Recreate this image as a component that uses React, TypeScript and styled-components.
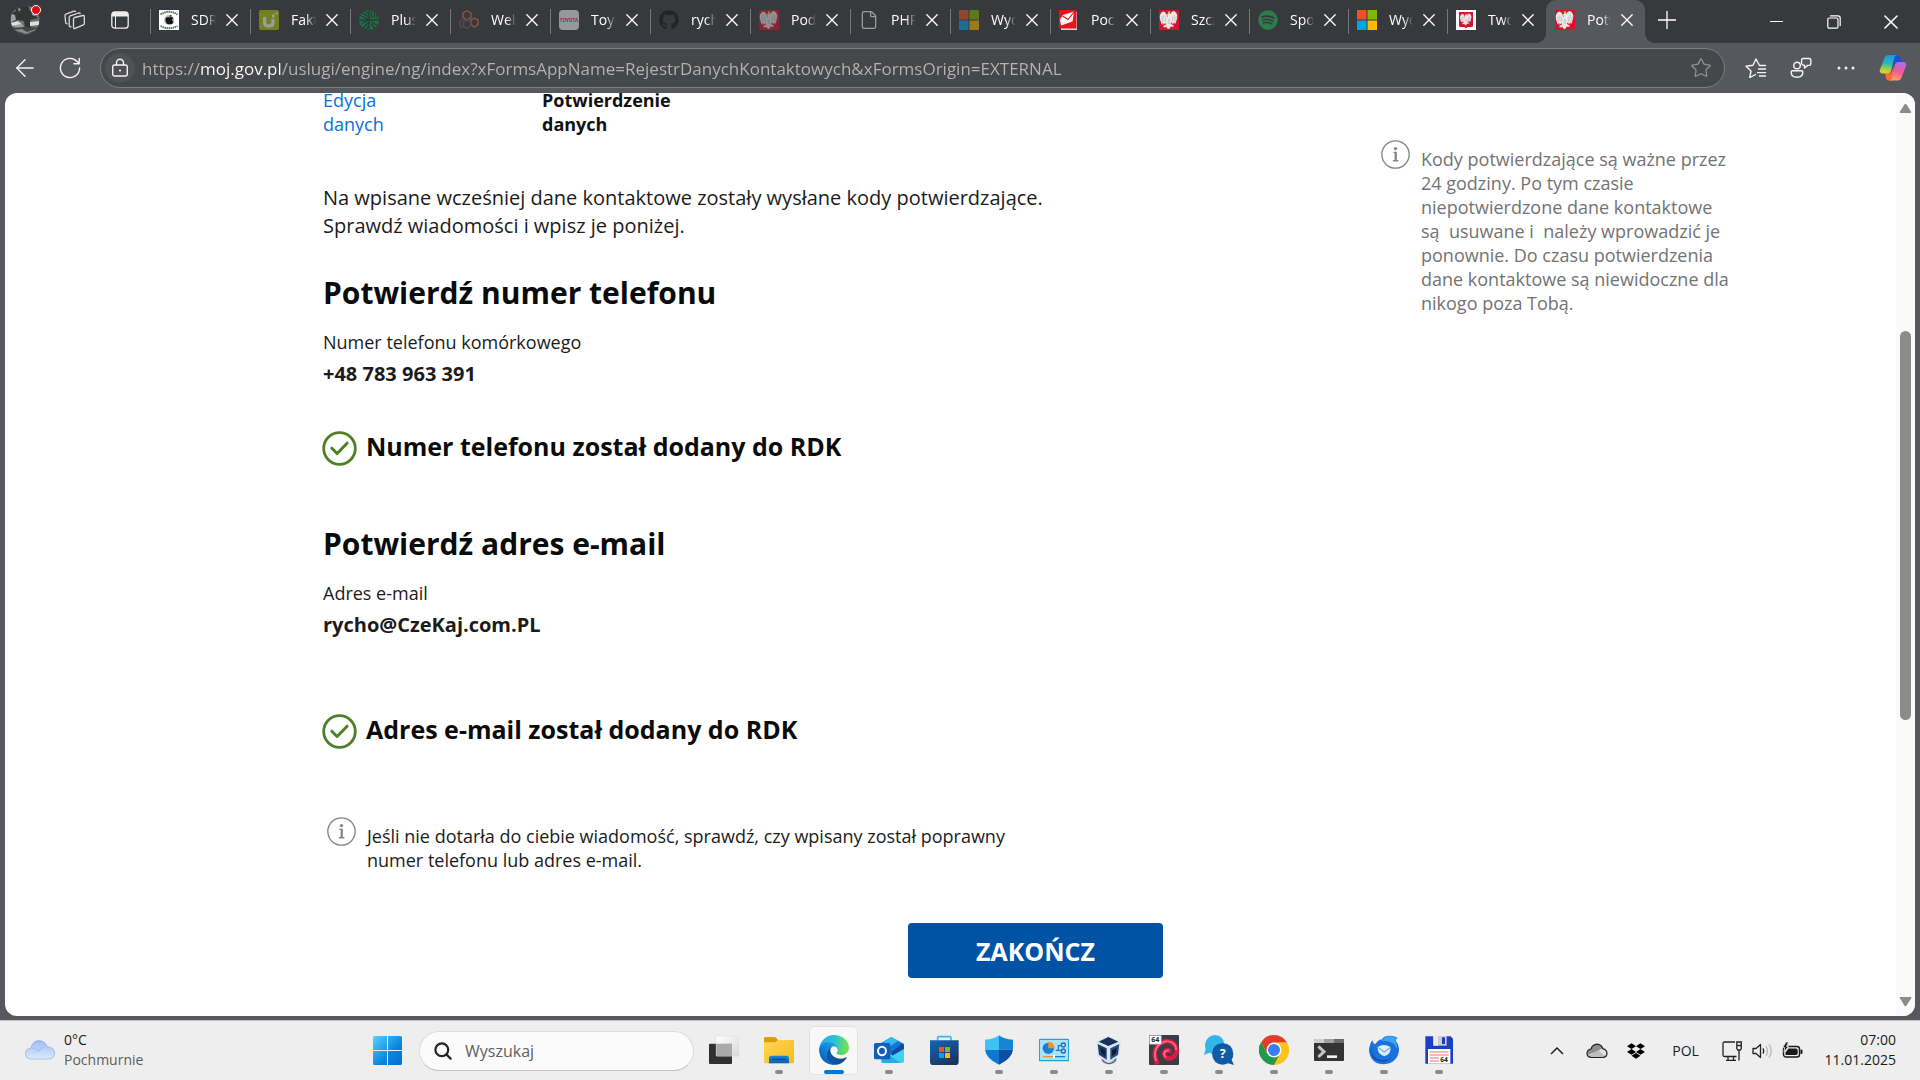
import React from "react";
import styled, { createGlobalStyle, css } from "styled-components";
import { FaApple, FaDropbox, FaGithub, FaSpotify } from "react-icons/fa";
import { ArrowLeft, File, Star } from "lucide-react";

const uiFont = `"Open Sans", "Noto Sans", sans-serif`;

const GlobalStyle = createGlobalStyle`
  * { box-sizing: border-box; }
  html, body { margin: 0; }
  body { font-family: ${uiFont}; background: #57585d; }
  h2, p { margin: 0; }
  button, input { font-family: inherit; }
`;

const Desktop = styled.div`
  display: flex;
  flex-direction: column;
  height: 100vh;
  overflow: hidden;
`;

const plainButton = css`
  display: flex;
  align-items: center;
  justify-content: center;
  flex: none;
  padding: 0;
  border: 0;
  background: none;
  color: inherit;
`;

/* ---------- tab strip ---------- */

const TabBar = styled.header`
  display: flex;
  flex: none;
  height: 43px;
  padding-right: 1px;
  background: #38393c;
  color: #fff;
`;

const BarButton = styled.button<{ $width: number }>`
  ${plainButton}
  width: ${(p) => p.$width}px;
  height: 40px;
`;

const WindowButton = styled(BarButton)`
  height: 43px;
`;

const Tabs = styled.nav`
  display: flex;
  margin-left: 10px;
`;

const Tab = styled.div<{ $active?: boolean; $slim?: boolean }>`
  position: relative;
  display: flex;
  align-items: center;
  flex: 0 1 ${(p) => (p.$slim ? 99 : 100)}px;
  min-width: 0;
  padding: 0 9px 3px 8px;
  border-left: 1px solid transparent;
  ${(p) =>
    p.$active
      ? css`
          background: #57585d;
          border-radius: 10px 10px 0 0;
          &::before,
          &::after {
            content: "";
            position: absolute;
            bottom: 0;
            width: 10px;
            height: 10px;
          }
          &::before {
            left: -11px;
            background: radial-gradient(circle at 0 0, transparent 10px, #57585d 10px);
          }
          &::after {
            right: -10px;
            background: radial-gradient(circle at 100% 0, transparent 10px, #57585d 10px);
          }
        `
      : css`
          background: linear-gradient(#77787b, #77787b) left 9px / 1px 25px no-repeat border-box;
        `}
`;

const Favicon = styled.span<{ $asleep?: boolean }>`
  display: flex;
  flex: none;
  width: 20px;
  height: 20px;
  opacity: ${(p) => (p.$asleep ? 0.5 : 1)};
`;

const TabTitle = styled.span`
  flex: 1;
  margin: 0 7px 0 12px;
  overflow: hidden;
  white-space: nowrap;
  font-size: 14px;
  line-height: 20px;
  mask-image: linear-gradient(to right, #000 60%, transparent);
`;

const CloseTab = styled.button`
  ${plainButton}
  width: 18px;
  height: 20px;
`;

const DragArea = styled.div`
  flex: 1;
  min-width: 20px;
`;

/* ---------- address bar ---------- */

const Toolbar = styled.div`
  display: flex;
  align-items: center;
  flex: none;
  height: 50px;
  padding: 0 2px;
  background: #57585d;
  color: #f4f4f4;
`;

const ToolButton = styled.button`
  ${plainButton}
  width: 45px;
  height: 40px;
`;

const CopilotButton = styled(ToolButton)`
  width: 50px;
`;

const AddressBox = styled.form`
  display: flex;
  align-items: center;
  flex: 1;
  height: 40px;
  margin: 0 8px;
  padding: 0 4px;
  border: 1px solid #7d7e82;
  border-radius: 20px;
  background: #464749;
`;

const SiteInfo = styled.button`
  ${plainButton}
  width: 30px;
  height: 30px;
  border-radius: 15px;
  background: #505155;
`;

const AddressInput = styled.input`
  flex: 1;
  min-width: 0;
  height: 30px;
  margin-left: 7px;
  padding: 0;
  border: 0;
  outline: 0;
  font-size: 17px;
  color: transparent;
  background: linear-gradient(to right, #b4b4b5 58px, #fff 58px, #fff 140px, #b4b4b5 140px);
  background-clip: text;
`;

const StarButton = styled(ToolButton)`
  width: 38px;
  height: 38px;
  color: #909195;
`;

/* ---------- page ---------- */

const Frame = styled.div`
  display: flex;
  flex: 1;
  min-height: 0;
  padding: 0 5px 4px;
  background: #57585d;
`;

const Viewport = styled.div`
  display: flex;
  flex: 1;
  min-width: 0;
  overflow: hidden;
  border-radius: 12px;
  background: #fff;
`;

const Page = styled.div`
  display: grid;
  grid-template-columns: minmax(0, 1fr) 351px;
  align-items: start;
  flex: 1;
  min-width: 0;
  padding: 0 164px 0 318px;
`;

const Main = styled.main`
  display: flex;
  flex-direction: column;
  max-width: 840px;
  margin-top: -5px;
  color: #1b1b1b;
`;

const Steps = styled.nav`
  display: flex;
  font-size: 18px;
  line-height: 24px;
`;

const StepLink = styled.a`
  width: 219px;
  color: #0c6fde;
  text-decoration: none;
`;

const CurrentStep = styled.strong`
  font-weight: 700;
  color: #111;
`;

const Lead = styled.p`
  margin-top: 48px;
  font-size: 20px;
  line-height: 28px;
`;

const Title = styled.h2<{ $gap: number }>`
  margin-top: ${(p) => p.$gap}px;
  font-size: 30px;
  line-height: 40px;
  font-weight: 700;
  color: #0b0b0b;
`;

const FieldLabel = styled.p`
  margin-top: 17px;
  font-size: 18px;
  line-height: 24px;
`;

const FieldValue = styled.p`
  margin-top: 6px;
  font-size: 20px;
  line-height: 28px;
  font-weight: 700;
`;

const Status = styled.div<{ $gap: number }>`
  display: flex;
  align-items: flex-start;
  gap: 9px;
  margin: ${(p) => p.$gap}px 0 0 -1px;
  font-size: 25px;
  line-height: 30px;
  font-weight: 700;
  color: #0b0b0b;
`;

const Note = styled.div`
  display: flex;
  align-items: flex-start;
  gap: 11px;
`;

const NoteText = styled.p`
  flex: 1;
  padding-top: 7px;
  font-size: 18px;
  line-height: 24px;
`;

const MainNote = styled(Note)`
  margin: 68px 150px 0 4px;
`;

const Aside = styled.aside`
  padding-top: 47px;
  color: #737373;
`;

const FinishButton = styled.button`
  align-self: flex-end;
  width: 255px;
  height: 55px;
  margin-top: 51px;
  padding: 0;
  border: 0;
  border-radius: 4px;
  background: #0052a5;
  color: #fff;
  font-size: 25px;
  font-weight: 700;
`;

const ScrollTrack = styled.div`
  display: flex;
  flex-direction: column;
  align-items: center;
  flex: none;
  width: 19px;
  padding: 10px 0 9px;
  background: #fafafa;
`;

const ScrollSpace = styled.div<{ $share: number }>`
  flex: ${(p) => p.$share};
`;

const ScrollThumb = styled.div`
  flex: 388;
  width: 11px;
  border-radius: 6px;
  background: #8b8b8b;
`;

/* ---------- taskbar ---------- */

const Taskbar = styled.footer`
  display: flex;
  align-items: center;
  flex: none;
  height: 60px;
  padding-right: 24px;
  border-top: 1px solid #c4c4c4;
  background: #eee;
  color: #1b1b1b;
`;

const Weather = styled.button`
  ${plainButton}
  justify-content: flex-start;
  gap: 9px;
  width: 360px;
  padding: 0 0 2px 25px;
  text-align: left;
  font-size: 14px;
  line-height: 20px;
`;

const WeatherText = styled.span`
  color: #5d5d5d;
`;

const WeatherDegrees = styled.span`
  display: block;
  color: #1b1b1b;
`;

const StartButton = styled.button`
  ${plainButton}
  width: 55px;
  height: 48px;
`;

const SearchBox = styled.label`
  display: flex;
  align-items: center;
  gap: 13px;
  flex: none;
  width: 275px;
  height: 40px;
  margin: 0 2px 0 4px;
  padding: 0 14px;
  border: 1px solid #dcdcdc;
  border-bottom-color: #c4c4c4;
  border-radius: 20px;
  background: #fbfbfb;
`;

const SearchInput = styled.input`
  flex: 1;
  min-width: 0;
  padding: 0;
  border: 0;
  outline: 0;
  background: none;
  font-size: 16px;
  &::placeholder {
    color: #5f5f5f;
    opacity: 1;
  }
`;

const AppButton = styled.button<{ $state?: "open" | "active" }>`
  ${plainButton}
  flex-direction: column;
  justify-content: flex-start;
  gap: 5px;
  width: 49px;
  height: 49px;
  margin: 0 3px;
  padding-top: 8px;
  border: 1px solid ${(p) => (p.$state === "active" ? "#e2e2e2" : "transparent")};
  border-radius: 5px;
  background: ${(p) => (p.$state === "active" ? "#f8f8f8" : "none")};
  &::after {
    content: "";
    width: ${(p) => (p.$state === "active" ? 20 : 8)}px;
    height: 4px;
    border-radius: 2px;
    background: ${(p) => (p.$state === "active" ? "#0078d4" : p.$state ? "#8a8a8a" : "transparent")};
  }
`;

const Tray = styled.div`
  display: flex;
  align-items: center;
  margin-left: auto;
`;

const TrayButton = styled.button<{ $width: number }>`
  ${plainButton}
  width: ${(p) => p.$width}px;
  height: 48px;
  font-size: 14px;
`;

const Clock = styled.button`
  ${plainButton}
  margin-left: 16px;
  padding-bottom: 2px;
  text-align: right;
  font-size: 14px;
  line-height: 20px;
`;

/* ---------- drawings ---------- */

const CrossIcon = ({ size = 12 }: { size?: number }) => (
  <svg width={size} height={size} viewBox="0 0 12 12" stroke="#fff" strokeWidth="1.3" strokeLinecap="round">
    <path d="M.8.8l10.400 10.400M11.200.8L.8 11.200" />
  </svg>
);

const Eagle = () => (
  <g>
    <path
      fill="#e9e9ea"
      d="M8.300 7.500L7.600 4.600 6.300 2.600 4.600 1.600 2.800 2.300 1.400 4 .7 6.200 1 9.500l.9 2.600.5 2.400 1-1.700.6 2.400 1-2.300.6 1.700 1.100-1.500.3 1.300-2.300 1.300-.8 1.500 1.300-.4.6.9 1.600-1 .5 1.500L10 19l1.100-1.300.5-1.500 1.600 1 .6-.9 1.300.4-.8-1.500-2.300-1.300.3-1.300 1.100 1.500.6-1.700 1 2.300.6-2.400 1 1.700.5-2.400.9-2.600.3-3.300-.7-2.200-1.400-1.700-1.800-.7-1.700 1-1.300 2-.7 2.900z"
    />
    <path fill="#e9e9ea" d="M8 8.500l.6-2.700L7.800 5l1.300-1.700h1.800q1.400.7 1.200 2.300L12 8.500z" />
    <path fill="#f1c232" d="M8.800 1.200l.7.600.5-.8.500.8.800-.6-.2 2.200H9zM7.300 15.600l1 .9-1.300.3zM12.700 15.600l-1 .9 1.300.3z" />
    <path
      stroke="#b9a9ae"
      strokeWidth=".5"
      fill="none"
      d="M2.800 6l.5 5.500M4.600 5l.4 6.500M6.300 6.500l.4 5.500M17.200 6l-.5 5.500M15.400 5l-.4 6.500M13.700 6.500l-.4 5.500M9.300 9v5M10.700 9v5"
    />
  </g>
);

const EagleIcon = () => (
  <svg width="20" height="20" viewBox="0 0 20 20">
    <path fill="#d4142f" d="M0 0h20v20H0z" />
    <Eagle />
  </svg>
);

const EagleShieldIcon = () => (
  <svg width="20" height="20" viewBox="0 0 20 20">
    <path fill="#fff" d="M0 0h20v20H0z" />
    <path fill="#d4142f" d="M3 2h14v13.500q0 1.500-1.500 1.500h-4L10 18.500 8.500 17h-4Q3 17 3 15.500z" />
    <g transform="translate(3.500 2.800) scale(.65)">
      <Eagle />
    </g>
  </svg>
);

const WindowsTiles = () => (
  <svg width="20" height="20" viewBox="0 0 20 20">
    <path fill="#f25022" d="M0 0h9.500v9.500H0z" />
    <path fill="#7fba00" d="M10.500 0H20v9.500h-9.500z" />
    <path fill="#00a4ef" d="M0 10.500h9.500V20H0z" />
    <path fill="#ffb900" d="M10.500 10.500H20V20h-9.500z" />
  </svg>
);

const AppleStampIcon = () => (
  <svg width="20" height="20" viewBox="0 0 20 20">
    <path fill="#fff" d="M0 0h20v20H0z" />
    <path fill="none" stroke="#58705a" strokeWidth="1.900" strokeDasharray="1.500 .6" d="M1.500 4.500q8.500-5.500 17 0M1.500 16q8.500 4.500 17 0" />
    <circle cx="10" cy="10" r="5" fill="#8b8f8c" opacity=".6" />
    <g transform="translate(5 4)" color="#151515">
      <FaApple size={11} />
    </g>
  </svg>
);

const FakturaIcon = () => (
  <svg width="20" height="20" viewBox="0 0 20 20">
    <rect width="20" height="20" rx="2" fill="#a9c800" />
    <path fill="none" stroke="#fff" strokeWidth="3.200" d="M5.600 7v5.500q0 3.600 4.200 3.600t4.200-3.600V9" />
    <path fill="#fff" d="M13 4.600h2.800v2.800H13zM16.500 2.500h2v2h-2z" />
  </svg>
);

const PlusIcon = () => (
  <svg width="20" height="20" viewBox="0 0 20 20">
    <circle cx="10" cy="10" r="10" fill="#00a65a" />
    <path
      fill="none"
      stroke="#25362d"
      strokeWidth="1.300"
      d="M10 0v20M0 10h20M1.500 5.500L10 9.500M3.500 3L10 7M6 1l4 3M10 12l-6 6M10 9.500L3 13.500M10 15l-3 5M12.500 0v8M15.500 1.500V8M18 4v4M12.500 12l6 3.500M12 14l4 4"
    />
  </svg>
);

const HoneycombIcon = () => (
  <svg width="20" height="20" viewBox="0 0 20 20" fill="none" strokeWidth="1.500">
    <path stroke="#d2703f" d="M4 3l4-2.300L12 3v4.500L8 10 4 7.500zM12 10l3.500-2L19 10v4.500L15.500 17 12 14.500z" />
    <path stroke="#6a5d6c" d="M4.500 11.500l3.500-2 3.500 2V16L8 18.500 4.500 16zM4 9.500l-3 2V16l3 2" />
  </svg>
);

const ToyotaIcon = () => (
  <svg width="20" height="20" viewBox="0 0 20 20">
    <rect width="20" height="20" rx="4" fill="#f4f4f4" />
    <text x="10" y="11.600" textAnchor="middle" fontSize="4.500" fontWeight="700" fill="#d81e2c">
      TOYOTA
    </text>
  </svg>
);

const EnvelopeIcon = () => (
  <svg width="20" height="20" viewBox="0 0 20 20">
    <path fill="#d9d9d9" d="M2 2h16v18H2z" />
    <path fill="#e8131b" d="M0 0h17.500v18.500H0z" />
    <path fill="#fff" d="M1 9.500L4 5l11-3.500-1.500 10L2 15.500z" />
    <path stroke="#e8131b" strokeWidth="1.200" fill="none" d="M3.500 6l5.500 3.500L15 2" />
  </svg>
);

const AvatarIcon = () => (
  <svg width="50" height="40" viewBox="0 0 50 40">
    <defs>
      <clipPath id="avatar">
        <circle cx="25" cy="20" r="14.500" />
      </clipPath>
    </defs>
    <g clipPath="url(#avatar)">
      <path fill="#6c6e6e" d="M10 5h30v30H10z" />
      <path fill="#333535" d="M14 5h14l2 6 5-2-1 6 4 3-8 2 1 8-6 1-1-8-6-1-5 2 2-6-3-3 4-2z" />
      <path fill="#9da0a0" d="M11 14l4 1 1 5-5 2zM31 6l6 3-2 7-3-1zM14 25l7-3 3 5-8 3zM18 8l3 1-2 3z" />
      <path fill="#dedede" d="M11 23l7-2 3 3-9 2zM30 22l9-1v4l-9 1z" />
      <path fill="#444646" d="M10 28l14-1 16 1v8H10z" />
      <path fill="#8a8c8c" d="M14 30l8-1 5 3 9-3v1l-10 4z" />
    </g>
    <circle cx="36" cy="10" r="4.500" fill="#e30613" stroke="#fff" />
  </svg>
);

const WorkspacesIcon = () => (
  <svg width="22" height="20" viewBox="0 0 22 20" fill="none" stroke="#dcdcdc" strokeWidth="1.300" strokeLinejoin="round">
    <path d="M9.500 8.800q0-1 1-1.300l8.500-2q1.300-.3 1.300 1v7q0 1-.9 1.400l-8.300 3.500q-1.600.7-1.600-1z" />
    <path d="M7.500 16.500l-1.300.300q-1-.2-1-1.300V7.200q0-1 1-1.300L14.500 3q1.500-.4 1.800 1.200M3.600 14l-1-.3q-.9-.3-1-1.300L1 5.500q0-1 .9-1.300L10 1.100q1.300-.3 1.700.9" />
  </svg>
);

const TabActionsIcon = () => (
  <svg width="18" height="18" viewBox="0 0 18 18" fill="none" stroke="#eee" strokeWidth="1.300">
    <rect x=".8" y=".8" width="16.400" height="16.400" rx="3" />
    <path fill="#eee" stroke="none" d="M1 3q0-2 2-2h12q2 0 2 2v2.500H1z" />
    <path strokeWidth="1" d="M4.500 5v12" />
  </svg>
);

const LockIcon = () => (
  <svg width="18" height="20" viewBox="0 0 18 20" fill="none" stroke="#f4f4f4" strokeWidth="1.400">
    <rect x="1.700" y="7" width="14.600" height="11" rx="2" />
    <path d="M5.500 7V4.800a3.500 3.500 0 0 1 7 0V7" />
    <circle cx="9" cy="12.500" r="1.100" fill="#f4f4f4" stroke="none" />
  </svg>
);

const RefreshIcon = () => (
  <svg width="22" height="22" viewBox="0 0 22 22" fill="none" stroke="#f4f4f4" strokeWidth="1.400" strokeLinecap="round" strokeLinejoin="round">
    <path d="M20.600 11A9.600 9.600 0 1 1 18 4.400l1.800 2.100M20.200 1.500v5.300h-5.300" />
  </svg>
);

const FavoritesIcon = () => (
  <svg width="22" height="20" viewBox="0 0 22 20" fill="none" stroke="#f4f4f4" strokeWidth="1.400" strokeLinecap="round" strokeLinejoin="round">
    <path d="M20.500 7.500h-6L11 1 8 7.300 1 8.200l5 4.800-1.200 6.500L10.500 16.500M13.500 11h7M12.500 14.600h8M14.500 7.500h6M14.500 18h6" />
  </svg>
);

const PeopleChatIcon = () => (
  <svg width="22" height="22" viewBox="0 0 22 22" fill="none" stroke="#f4f4f4" strokeWidth="1.400" strokeLinejoin="round">
    <circle cx="7" cy="8.500" r="3.300" />
    <path d="M2.500 13.800h9q1.300 0 1.300 1.300 0 5.200-5.800 5.200t-5.800-5.200q0-1.300 1.300-1.300zM13 1.500h6.200q1.600 0 1.600 1.600v3.700q0 1.600-1.600 1.600h-1.500L14.500 11V8.200Q11.600 8.300 11.600 6V3q0-1.500 1.400-1.500z" />
  </svg>
);

const MoreIcon = () => (
  <svg width="18" height="4" viewBox="0 0 18 4" fill="#f4f4f4">
    <circle cx="2" cy="2" r="1.500" />
    <circle cx="9" cy="2" r="1.500" />
    <circle cx="16" cy="2" r="1.500" />
  </svg>
);

const CopilotIcon = () => (
  <svg width="28" height="28" viewBox="0 0 28 28">
    <defs>
      <linearGradient id="copilotLeft" x1=".4" y1="0" x2=".3" y2="1">
        <stop offset="0" stopColor="#169af0" />
        <stop offset=".45" stopColor="#2fb8b0" />
        <stop offset=".75" stopColor="#9fd046" />
        <stop offset="1" stopColor="#f4ce1a" />
      </linearGradient>
      <linearGradient id="copilotRight" x1=".7" y1="0" x2=".4" y2="1">
        <stop offset="0" stopColor="#a56ff2" />
        <stop offset=".5" stopColor="#f0569a" />
        <stop offset="1" stopColor="#ffa25c" />
      </linearGradient>
    </defs>
    <path fill="#1a4fd8" d="M14 1h4.500q2 0 2.700 2.300L22.500 8h-4q-3 0-3.800 3L13 16z" />
    <path fill="#ff6a3d" d="M14 26.500H9.800q-2 0-2.700-2.300L6 19.500h3.500q3 0 3.800-3L15 12z" />
    <path fill="url(#copilotLeft)" d="M16.500 1H9.400Q6.500 1 5.500 4L1 15.500Q-.2 19.500 4 19.500h4.800q2.400 0 3.200-2.600L15.200 4Q16 1 18.500 1z" />
    <path fill="url(#copilotRight)" d="M11.500 26.500h7.200q2.900 0 3.900-3L27 12q1.200-4-3-4h-4.800q-2.400 0-3.200 2.600L13 23.500q-.8 3-3.200 3z" />
  </svg>
);

const SuccessIcon = () => (
  <svg width="35" height="35" viewBox="0 0 35 35" fill="none" stroke="#4e8028" strokeWidth="2.800">
    <circle cx="17.500" cy="17.500" r="15.800" />
    <path d="M9.800 17.200l5.300 5.300 10-10.300" strokeWidth="3" strokeLinecap="round" strokeLinejoin="round" />
  </svg>
);

const InfoIcon = () => (
  <svg width="29" height="29" viewBox="0 0 28 28" fill="none" stroke="#858585" strokeWidth="1.300">
    <circle cx="14" cy="14" r="13.200" />
    <circle cx="14" cy="8.300" r="1.600" fill="#858585" stroke="none" />
    <path strokeWidth="2.200" d="M14.200 11.500v8.500" />
    <path strokeWidth="1.300" d="M12 12h3M11.500 20h5.300" />
  </svg>
);

const ScrollArrow = ({ down = false }: { down?: boolean }) => (
  <svg width="13" height="11" viewBox="0 0 13 11" fill="#8b8b8b">
    <path d={down ? "M1.600 1h9.800q1.400 0 .7 1.300L7.600 9.400q-1.100 1.400-2.200 0L.9 2.300Q.2 1 1.600 1z" : "M1.600 10h9.800q1.400 0 .7-1.300L7.600 1.600q-1.100-1.400-2.200 0L.9 8.700Q.2 10 1.600 10z"} />
  </svg>
);

const CloudIcon = () => (
  <svg width="30" height="20" viewBox="0 0 30 20">
    <defs>
      <linearGradient id="cloud" x1="0" y1="0" x2="0" y2="1">
        <stop offset="0" stopColor="#9cbcf3" />
        <stop offset="1" stopColor="#dfe9fb" />
      </linearGradient>
    </defs>
    <path fill="url(#cloud)" stroke="#7fa1e6" strokeWidth=".6" d="M6 19q-5.500-.2-5.600-5.600Q.6 8.500 5.800 8.200 7.500.8 14 .6q6.400.2 8.200 6.200 7 .1 7.400 6.200Q29.300 18.800 23.500 19z" />
    <path fill="#8fb1ee" opacity=".6" d="M5.800 8.200q4-.6 7 2 3.500-3.600 9.400-3.400Q15 8 13.500 12 10 8.500 5.800 8.200z" />
  </svg>
);

const StartIcon = () => (
  <svg width="29" height="29" viewBox="0 0 29 29">
    <defs>
      <linearGradient id="start" gradientUnits="userSpaceOnUse" x1="0" y1="0" x2="29" y2="29">
        <stop offset="0" stopColor="#54d5ff" />
        <stop offset=".6" stopColor="#0a86dc" />
        <stop offset="1" stopColor="#0070cf" />
      </linearGradient>
    </defs>
    <path fill="url(#start)" d="M1.500 0H14v14H0V1.500Q0 0 1.500 0zM15 0h12.500Q29 0 29 1.500V14H15zM0 15h14v14H1.500Q0 29 0 27.500zM15 15h14v12.500q0 1.500-1.500 1.500H15z" />
  </svg>
);

const MagnifierIcon = () => (
  <svg width="18" height="18" viewBox="0 0 18 18" fill="none" stroke="#222" strokeWidth="2.200" strokeLinecap="round">
    <circle cx="7.800" cy="7.800" r="6.400" />
    <path d="M12.600 12.600l4 4" />
  </svg>
);

const AppIcon = ({ children }: { children: React.ReactNode }) => (
  <svg width="30" height="30" viewBox="0 0 90 90">
    {children}
  </svg>
);

const TaskViewIcon = () => (
  <AppIcon>
    <defs>
      <linearGradient id="pane" x1="0" y1="0" x2="1" y2="1">
        <stop offset="0" stopColor="#fff" />
        <stop offset="1" stopColor="#d8d8d8" />
      </linearGradient>
    </defs>
    <rect x="0" y="26" width="69" height="61" rx="3" fill="#2f302f" />
    <rect x="21" y="3" width="69" height="61" rx="3" fill="url(#pane)" stroke="#d0d0d0" />
    <path fill="#aaa" d="M22 26h47v37H22z" />
  </AppIcon>
);

const FolderIcon = () => (
  <AppIcon>
    <defs>
      <linearGradient id="folder" x1="0" y1="0" x2="1" y2="1">
        <stop offset="0" stopColor="#ffd75e" />
        <stop offset="1" stopColor="#f9b912" />
      </linearGradient>
      <linearGradient id="folderTray" x1="0" y1="0" x2="0" y2="1">
        <stop offset="0" stopColor="#1688dd" />
        <stop offset="1" stopColor="#0b5fae" />
      </linearGradient>
    </defs>
    <path fill="#dd9d06" d="M0 10q0-4 4-4h28q4 0 7 5l3 4h48v10H0z" />
    <path fill="url(#folder)" d="M0 22h34l8-7h45q3 0 3 3v63q0 4-4 4H4q-4 0-4-4z" />
    <path fill="url(#folderTray)" d="M15 85V70q0-8 8-8h44q8 0 8 8v15z" />
    <path fill="#074a92" d="M24 71h42v4H24z" />
  </AppIcon>
);

const EdgeIcon = () => (
  <svg width="30" height="30" viewBox="4 4 257 257">
    <defs>
      <linearGradient id="edgeBase" x1="63" y1="178" x2="241" y2="178" gradientUnits="userSpaceOnUse">
        <stop offset="0" stopColor="#0c59a4" />
        <stop offset="1" stopColor="#114a8b" />
      </linearGradient>
      <linearGradient id="edgeBody" x1="157" y1="101" x2="46" y2="222" gradientUnits="userSpaceOnUse">
        <stop offset="0" stopColor="#1b9de2" />
        <stop offset=".5" stopColor="#1583d8" />
        <stop offset="1" stopColor="#0a63c0" />
      </linearGradient>
      <linearGradient id="edgeWave" x1="20" y1="70" x2="255" y2="110" gradientUnits="userSpaceOnUse">
        <stop offset="0" stopColor="#2ba9e4" />
        <stop offset=".5" stopColor="#2fc4cf" />
        <stop offset=".8" stopColor="#5bdb6f" />
        <stop offset="1" stopColor="#72e04c" />
      </linearGradient>
    </defs>
    <path fill="url(#edgeBase)" d="M235.680 195.460a93.730 93.730 0 0 1-10.540 4.710 101.870 101.870 0 0 1-35.900 6.460c-47.320 0-88.540-32.550-88.540-74.320A31.480 31.480 0 0 1 117.130 105c-42.800 1.800-53.800 46.400-53.800 72.530 0 73.880 68.090 81.370 82.760 81.370 7.910 0 19.840-2.300 27-4.560l1.310-.44a128.340 128.340 0 0 0 66.600-52.800 4 4 0 0 0-5.320-5.640z" />
    <path fill="url(#edgeBody)" d="M110.340 246.340A79.200 79.200 0 0 1 87.600 225a80.720 80.720 0 0 1 29.530-120c3.120-1.470 8.450-4.130 15.540-4a32.350 32.350 0 0 1 25.690 13 31.880 31.880 0 0 1 6.360 18.660c0-.21 24.460-79.600-80-79.600-43.900 0-80 41.660-80 78.210a130.150 130.150 0 0 0 12.110 56 128 128 0 0 0 156.380 67.110 75.550 75.550 0 0 1-62.780-8z" />
    <path fill="url(#edgeWave)" d="M156.940 153.780c-.81 1.050-3.300 2.500-3.300 5.660 0 2.610 1.700 5.120 4.720 7.230 14.380 10 41.490 8.680 41.560 8.680a59.560 59.560 0 0 0 30.270-8.350 61.380 61.380 0 0 0 30.430-52.880c.26-22.410-8-37.310-11.340-43.910C228.090 28.760 182.350 5 132.610 5a128 128 0 0 0-128 126.200c.48-36.540 36.800-66.050 80-66.050 3.500 0 23.460.34 42 10.070 16.340 8.580 24.900 18.940 30.850 29.210 6.180 10.670 7.280 24.150 7.280 29.520s-2.740 13.330-7.800 19.830z" />
  </svg>
);

const OutlookIcon = () => (
  <AppIcon>
    <path fill="#1d9be8" d="M14 28L52 6l36 20v14L50 62 14 50z" />
    <path fill="#35b8f1" d="M30 19L52 6l22 12-32 20z" />
    <path fill="#0f4aa0" d="M50 50l36-26q4 2 4 7v12L55 66z" />
    <path fill="#1476d2" d="M38 42l34-24 14 7-38 30z" />
    <path fill="#3fd0f5" d="M90 42v36q0 6-6 6H28q-6 0-6-4z" />
    <path fill="#27a9ea" d="M22 60l26 2 32 22H28q-6 0-6-6z" />
    <rect x="0" y="24" width="49" height="49" rx="5" fill="#0f5fb9" />
    <ellipse cx="24" cy="48" rx="12" ry="13" fill="none" stroke="#fff" strokeWidth="6" />
  </AppIcon>
);

const StoreIcon = () => (
  <AppIcon>
    <defs>
      <linearGradient id="store" x1="0" y1="0" x2=".6" y2="1">
        <stop offset="0" stopColor="#1167b5" />
        <stop offset="1" stopColor="#1f355f" />
      </linearGradient>
    </defs>
    <path fill="none" stroke="#35bdf0" strokeWidth="5" d="M26 18V8q0-3 3-3h34q3 0 3 3v10" />
    <path fill="url(#store)" d="M3 16h86v64q0 10-10 10H13Q3 90 3 80z" />
    <path fill="#f25022" d="M30 36h15v15H30z" />
    <path fill="#7fba00" d="M48 36h15v15H48z" />
    <path fill="#00a4ef" d="M30 54h15v15H30z" />
    <path fill="#ffb900" d="M48 54h15v15H48z" />
  </AppIcon>
);

const DefenderIcon = () => (
  <AppIcon>
    <path fill="#3cc3f3" d="M45 1Q31 13 3 14v30h42z" />
    <path fill="#1583d6" d="M45 1q14 12 42 13v30H45z" />
    <path fill="#0f78d0" d="M3 44h42v45Q6 70 3 44z" />
    <path fill="#0c4fa0" d="M87 44H45v45q39-19 42-45z" />
  </AppIcon>
);

const ControlPanelIcon = () => (
  <AppIcon>
    <rect x="1" y="13" width="88" height="64" rx="3" fill="#a9e1fb" stroke="#2a9fd8" strokeWidth="4" />
    <circle cx="28" cy="40" r="17" fill="#1b7fcb" />
    <path fill="#f7901e" d="M28 40V20q18 1 19 20z" />
    <path stroke="#1b7fcb" strokeWidth="4" fill="none" d="M50 46h8V32h10M60 46h10" />
    <circle cx="73" cy="30" r="6" fill="none" stroke="#1b6fb8" strokeWidth="4" />
    <circle cx="73" cy="48" r="6" fill="none" stroke="#1b6fb8" strokeWidth="4" />
    <path stroke="#f7901e" strokeWidth="4" d="M12 65h32" />
    <path stroke="#1b7fcb" strokeWidth="4" d="M44 65h34" />
    <path fill="#fff" d="M42 60h6v10h-6z" />
  </AppIcon>
);

const VirtualBoxIcon = () => (
  <AppIcon>
    <ellipse cx="45" cy="74" rx="24" ry="14" fill="#b9c3d6" />
    <path fill="none" stroke="#4d6288" strokeWidth="4" d="M24 66q2 18 21 20 19-2 21-20" />
    <path fill="#dce4f0" d="M42 3L6 20l5 44 32 20 33-20 5-44z" />
    <path fill="#16335c" d="M43 6L14 20l29 13 30-13z" />
    <path fill="#1e3e6b" d="M11 27l27 13v34L15 59z" />
    <path fill="#284a7c" d="M76 27L49 40v34l23-15z" />
    <path fill="#0b1d3c" d="M20 38l14 8v17l-13-9zM68 38l-14 8v17l13-9z" />
  </AppIcon>
);

const Spiral64Icon = () => (
  <AppIcon>
    <rect width="90" height="90" rx="3" fill="#393d49" />
    <g fill="none" strokeLinecap="round">
      <path stroke="#d81c45" strokeWidth="14" d="M24 82C10 54 20 24 50 19c26-2 36 18 32 34-6 20-30 22-36 8-4-12 8-20 16-13" />
      <path stroke="#fb6f84" strokeWidth="5" d="M21 76C12 52 22 26 50 19c22-2 32 12 31 24M50 66c-9-8-4-20 8-20" />
    </g>
    <path fill="#fff" stroke="#888" strokeWidth="2" d="M1 1h36v27H1z" />
    <text x="19" y="22" textAnchor="middle" fontSize="21" fontWeight="700" fill="#222">
      64
    </text>
  </AppIcon>
);

const HelpIcon = () => (
  <AppIcon>
    <path fill="#35b4ea" d="M32 0q28 2 29 28Q60 56 32 57q-10 0-16-4L0 60l5-18Q1 34 4 24 10 2 32 0z" />
    <path fill="#0f5ca6" d="M56 24q30 2 32 32 0 12-5 18l7 16-18-5q-8 4-16 4-30-3-32-33 2-30 32-32z" />
    <text x="56" y="70" textAnchor="middle" fontSize="38" fontWeight="700" fill="#fff">
      ?
    </text>
  </AppIcon>
);

const ChromeIcon = () => (
  <AppIcon>
    <circle cx="45" cy="45" r="45" fill="#fcc31e" />
    <path fill="#e33b2e" d="M6 22.500Q20 0 45 0t39 22.500H45L26 56z" />
    <path fill="#1f9a4c" d="M6 22.500L25.500 56 64 55 45 90Q20 90 6 67.500t0-45z" />
    <path fill="#fcc31e" d="M84 22.500Q92 38 89 55 82 88 45 90l19.500-34q6-20-8-33.500z" />
    <circle cx="45" cy="45" r="22.500" fill="#fff" />
    <circle cx="45" cy="45" r="18" fill="#3b7ded" />
  </AppIcon>
);

const TerminalIcon = () => (
  <AppIcon>
    <rect y="12" width="90" height="66" rx="3" fill="#333" />
    <path fill="#cfcfcf" d="M0 24V15q0-3 3-3h27v12z" />
    <path fill="#a0a0a0" d="M30 12h30v12H30z" />
    <path fill="#6b6b6b" d="M60 12h27q3 0 3 3v9H60z" />
    <path fill="none" stroke="#c4c4c4" strokeWidth="9" d="M13 34l17 16-17 16" />
    <path fill="#f2f2f2" d="M39 61h30v8H39z" />
  </AppIcon>
);

const ThunderbirdIcon = () => (
  <AppIcon>
    <path fill="#1b72dd" d="M10 16q2 8 8 12Q30 12 38 14 44 2 62 2q18 0 24 8l-7 5q12 14 11 31-4 38-45 42Q6 88 0 48 0 30 10 16z" />
    <path fill="#3ba6f5" d="M38 18Q46 4 64 4q14 0 20 6l-8 5q10 10 8 27Q78 24 62 20 48 16 38 18z" />
    <path fill="#124fb5" d="M6 34Q6 62 26 72q22 10 44-6-16 20-44 12Q0 68 6 34z" />
    <path fill="#dceffd" d="M26 36q18-12 38 0 4 20-18 28-22-8-20-28z" />
    <path fill="none" stroke="#6db4f0" strokeWidth="3.500" d="M28 38l18 13 17-13" />
  </AppIcon>
);

const FloppyIcon = () => (
  <AppIcon>
    <path fill="#1d3fc4" d="M4 4h76l7 7v75H4z" />
    <path fill="#c9ccd3" d="M28 3h40v29H28z" />
    <path fill="#e9ebee" d="M28 3h14v29H28z" />
    <path fill="#1d3fc4" d="M54 7h9v20h-9z" />
    <path fill="#fff" d="M12 42h67v44H12z" />
    <path stroke="#eda4a4" strokeWidth="4" d="M17 51h57M17 60h57M17 69h28M17 78h28" />
    <text x="60" y="82" textAnchor="middle" fontSize="20" fontWeight="700" fill="#222">
      64
    </text>
  </AppIcon>
);

const OneDriveIcon = () => (
  <svg width="22" height="16" viewBox="0 0 22 16">
    <path fill="#e2e2e2" d="M5.500 14.500Q1 14 1 10.200 1.200 6.500 5 6 6.500 1.500 11 1.200q4.500.3 6 4.600 3.800.7 4 4.600-.2 3.600-4 4.100z" />
    <path fill="#8e8e8e" d="M1.500 12Q.5 7 5 6 6.500 1.500 11 1.200q4.500.3 6 4.600-3 0-4.500 2z" />
    <path fill="#bdbdbd" d="M2 13l10-5.500 8 6-3 1.200H5.500z" />
    <path fill="none" stroke="#222" strokeWidth="1.200" d="M5.500 14.500Q1 14 1 10.200 1.200 6.500 5 6 6.500 1.500 11 1.200q4.500.3 6 4.600 3.800.7 4 4.600-.2 3.600-4 4.100z" />
  </svg>
);

const NetworkIcon = () => (
  <svg width="20" height="20" viewBox="0 0 20 20" fill="none" stroke="#222" strokeWidth="1.300">
    <path d="M13 1H2.500Q1 1 1 2.500V14q0 1.500 1.500 1.500h12M6 16v3M11.500 16v3M4 19.300h10M14.800 1h4.500v6.500l-1 1.500h-2.500l-1-1.500zM14.800 4.500h4.500M17 9v10.500" />
  </svg>
);

const VolumeIcon = () => (
  <svg width="21" height="18" viewBox="0 0 21 18" fill="none" stroke="#222" strokeWidth="1.300" strokeLinejoin="round">
    <path d="M1 6.500h3l4.500-4v13l-4.500-4H1z" />
    <path d="M11 6.300q1.600 2.700 0 5.400" />
    <path stroke="#bbb" d="M14 4.300q3 4.700 0 9.400M17 2.300q4.500 6.700 0 13.400" />
  </svg>
);

const BatteryIcon = () => (
  <svg width="21" height="18" viewBox="0 0 21 18">
    <rect x="1.500" y="4.500" width="16" height="10.500" rx="2.500" fill="#eee" stroke="#1b1b1b" strokeWidth="1.400" />
    <path fill="#1b1b1b" d="M6.500 6.500h7.500q1.700 0 1.700 1.700v3.100q0 1.700-1.700 1.700H3.500v-2.500zM18.500 7.500h1q1 0 1 1V11q0 1-1 1h-1z" />
    <path fill="#1b1b1b" stroke="#eee" strokeWidth=".8" d="M4 0L.6 5.500h2L2 10l4.500-5.500h-2L6.500 0z" />
  </svg>
);

/* ---------- content ---------- */

type TabInfo = { title: string; icon: React.ReactNode; asleep?: boolean; slim?: boolean; active?: boolean };

const tabs: TabInfo[] = [
  { title: "SDR", icon: <AppleStampIcon /> },
  { title: "Fakt", icon: <FakturaIcon />, asleep: true },
  { title: "Plus", icon: <PlusIcon />, asleep: true },
  { title: "Web", icon: <HoneycombIcon />, asleep: true },
  { title: "Toyo", icon: <ToyotaIcon />, asleep: true },
  { title: "rych", icon: <FaGithub size={20} color="#0d1117" />, asleep: true },
  { title: "Pod", icon: <EagleIcon />, asleep: true },
  { title: "PHP", icon: <File size={20} color="#fff" strokeWidth={1.5} />, asleep: true },
  { title: "Wyc", icon: <WindowsTiles />, asleep: true },
  { title: "Pocz", icon: <EnvelopeIcon /> },
  { title: "Szcz", icon: <EagleIcon />, slim: true },
  { title: "Spot", icon: <FaSpotify size={20} color="#2b7d4b" />, slim: true },
  { title: "Wyc", icon: <WindowsTiles />, slim: true },
  { title: "Two", icon: <EagleShieldIcon />, slim: true },
  { title: "Potw", icon: <EagleIcon />, slim: true, active: true },
];

type AppInfo = { name: string; icon: React.ReactNode; state?: "open" | "active" };

const apps: AppInfo[] = [
  { name: "Widok zadań", icon: <TaskViewIcon /> },
  { name: "Eksplorator plików", icon: <FolderIcon />, state: "open" },
  { name: "Microsoft Edge", icon: <EdgeIcon />, state: "active" },
  { name: "Outlook", icon: <OutlookIcon />, state: "open" },
  { name: "Microsoft Store", icon: <StoreIcon /> },
  { name: "Zabezpieczenia", icon: <DefenderIcon />, state: "open" },
  { name: "Panel sterowania", icon: <ControlPanelIcon />, state: "open" },
  { name: "VirtualBox", icon: <VirtualBoxIcon />, state: "open" },
  { name: "PSPad", icon: <Spiral64Icon />, state: "open" },
  { name: "Pomoc", icon: <HelpIcon />, state: "open" },
  { name: "Chrome", icon: <ChromeIcon />, state: "open" },
  { name: "Terminal", icon: <TerminalIcon />, state: "open" },
  { name: "Thunderbird", icon: <ThunderbirdIcon />, state: "open" },
  { name: "Total Commander", icon: <FloppyIcon />, state: "open" },
];

const address =
  "https://moj.gov.pl/uslugi/engine/ng/index?xFormsAppName=RejestrDanychKontaktowych&xFormsOrigin=EXTERNAL";

export default function App() {
  return (
    <Desktop>
      <GlobalStyle />
      <TabBar>
        <BarButton $width={50} aria-label="Profil">
          <AvatarIcon />
        </BarButton>
        <BarButton $width={50} aria-label="Obszary robocze">
          <WorkspacesIcon />
        </BarButton>
        <BarButton $width={40} aria-label="Karty">
          <TabActionsIcon />
        </BarButton>
        <Tabs aria-label="Otwarte karty">
          {tabs.map((tab, i) => (
            <Tab key={i} $active={tab.active} $slim={tab.slim}>
              <Favicon $asleep={tab.asleep}>{tab.icon}</Favicon>
              <TabTitle>{tab.title}</TabTitle>
              <CloseTab aria-label="Zamknij kartę">
                <CrossIcon />
              </CloseTab>
            </Tab>
          ))}
        </Tabs>
        <BarButton $width={44} aria-label="Nowa karta">
          <svg width="18" height="18" viewBox="0 0 18 18" stroke="#fff" strokeWidth="1.300">
            <path d="M9 0v18M0 9h18" />
          </svg>
        </BarButton>
        <DragArea />
        <WindowButton $width={57} aria-label="Minimalizuj">
          <svg width="13" height="13" viewBox="0 0 13 13" stroke="#fff">
            <path d="M0 6.500h13" />
          </svg>
        </WindowButton>
        <WindowButton $width={57} aria-label="Przywróć">
          <svg width="14" height="14" viewBox="0 0 14 14" fill="none" stroke="#fff" strokeWidth="1.200">
            <rect x=".8" y="3" width="10.200" height="10.200" rx="1.500" />
            <path d="M3 .8h8q2.200 0 2.200 2.200v8" />
          </svg>
        </WindowButton>
        <WindowButton $width={57} aria-label="Zamknij">
          <CrossIcon size={14} />
        </WindowButton>
      </TabBar>

      <Toolbar>
        <ToolButton aria-label="Wstecz">
          <ArrowLeft size={28} strokeWidth={1.2} />
        </ToolButton>
        <ToolButton aria-label="Odśwież">
          <RefreshIcon />
        </ToolButton>
        <AddressBox onSubmit={(e) => e.preventDefault()}>
          <SiteInfo type="button" aria-label="Informacje o witrynie">
            <LockIcon />
          </SiteInfo>
          <AddressInput aria-label="Adres" defaultValue={address} spellCheck={false} />
          <StarButton type="button" aria-label="Dodaj do ulubionych">
            <Star size={22} strokeWidth={1.4} />
          </StarButton>
        </AddressBox>
        <ToolButton aria-label="Ulubione">
          <FavoritesIcon />
        </ToolButton>
        <ToolButton aria-label="Opinie">
          <PeopleChatIcon />
        </ToolButton>
        <ToolButton aria-label="Więcej">
          <MoreIcon />
        </ToolButton>
        <CopilotButton aria-label="Copilot">
          <CopilotIcon />
        </CopilotButton>
      </Toolbar>

      <Frame>
        <Viewport>
          <Page>
            <Main>
              <Steps aria-label="Kroki">
                <StepLink href="#edycja">
                  Edycja
                  <br />
                  danych
                </StepLink>
                <CurrentStep>
                  Potwierdzenie
                  <br />
                  danych
                </CurrentStep>
              </Steps>
              <Lead>
                Na wpisane wcześniej dane kontaktowe zostały wysłane kody potwierdzające.
                <br />
                Sprawdź wiadomości i wpisz je poniżej.
              </Lead>

              <Title $gap={33}>Potwierdź numer telefonu</Title>
              <FieldLabel>Numer telefonu komórkowego</FieldLabel>
              <FieldValue>+48 783 963 391</FieldValue>
              <Status $gap={43}>
                <SuccessIcon />
                Numer telefonu został dodany do RDK
              </Status>

              <Title $gap={58}>Potwierdź adres e-mail</Title>
              <FieldLabel>Adres e-mail</FieldLabel>
              <FieldValue>rycho@CzeKaj.com.PL</FieldValue>
              <Status $gap={75}>
                <SuccessIcon />
                Adres e-mail został dodany do RDK
              </Status>

              <MainNote>
                <InfoIcon />
                <NoteText>
                  Jeśli nie dotarła do ciebie wiadomość, sprawdź, czy wpisany został poprawny numer telefonu lub adres
                  e-mail.
                </NoteText>
              </MainNote>
              <FinishButton>ZAKOŃCZ</FinishButton>
            </Main>

            <Aside>
              <Note>
                <InfoIcon />
                <NoteText>
                  Kody potwierdzające są ważne przez 24 godziny. Po tym czasie niepotwierdzone dane kontaktowe
                  są&nbsp; usuwane i&nbsp; należy wprowadzić je ponownie. Do czasu potwierdzenia dane kontaktowe są
                  niewidoczne dla nikogo poza Tobą.
                </NoteText>
              </Note>
            </Aside>
          </Page>
          <ScrollTrack aria-hidden>
            <ScrollArrow />
            <ScrollSpace $share={217} />
            <ScrollThumb />
            <ScrollSpace $share={276} />
            <ScrollArrow down />
          </ScrollTrack>
        </Viewport>
      </Frame>

      <Taskbar>
        <Weather>
          <CloudIcon />
          <WeatherText>
            <WeatherDegrees>0°C</WeatherDegrees>
            Pochmurnie
          </WeatherText>
        </Weather>
        <StartButton aria-label="Start">
          <StartIcon />
        </StartButton>
        <SearchBox>
          <MagnifierIcon />
          <SearchInput type="text" placeholder="Wyszukaj" aria-label="Wyszukaj" />
        </SearchBox>
        {apps.map((app) => (
          <AppButton key={app.name} $state={app.state} aria-label={app.name}>
            {app.icon}
          </AppButton>
        ))}
        <Tray>
          <TrayButton $width={40} aria-label="Ukryte ikony">
            <svg width="14" height="8" viewBox="0 0 14 8" fill="none" stroke="#222" strokeWidth="1.500">
              <path d="M1 7l6-6 6 6" />
            </svg>
          </TrayButton>
          <TrayButton $width={40} aria-label="OneDrive">
            <OneDriveIcon />
          </TrayButton>
          <TrayButton $width={39} aria-label="Dropbox">
            <FaDropbox size={18} color="#000" />
          </TrayButton>
          <TrayButton $width={60}>POL</TrayButton>
          <TrayButton $width={33} aria-label="Sieć">
            <NetworkIcon />
          </TrayButton>
          <TrayButton $width={28} aria-label="Głośność">
            <VolumeIcon />
          </TrayButton>
          <TrayButton $width={32} aria-label="Bateria">
            <BatteryIcon />
          </TrayButton>
          <Clock>
            07:00
            <br />
            11.01.2025
          </Clock>
        </Tray>
      </Taskbar>
    </Desktop>
  );
}
